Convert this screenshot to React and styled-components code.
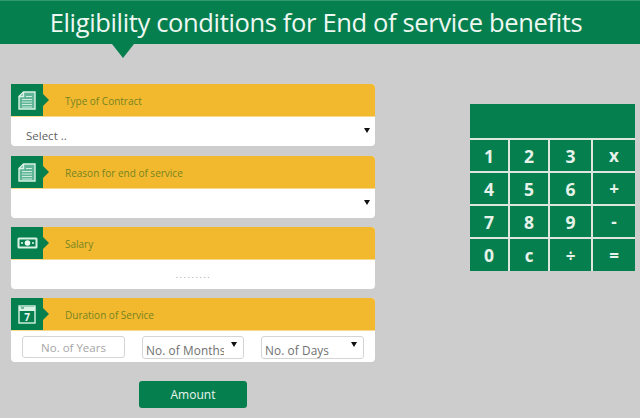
import React from 'react';
import styled, { createGlobalStyle } from 'styled-components';

const GREEN = '#067f4f';
const YELLOW = '#f2b92f';

const GlobalStyle = createGlobalStyle`
  html, body {
    margin: 0;
    padding: 0;
    background: #cdcdcd;
    font-family: "Open Sans", "Noto Sans", sans-serif;
  }
`;

const Page = styled.div`
  width: 640px;
  height: 418px;
  overflow: hidden;
`;

const Header = styled.header`
  position: relative;
  height: 44px;
  padding-right: 8px;
  background: ${GREEN};
  border-top: 1px solid #2f9a70;
  box-sizing: border-box;
  color: #eef8f2;
  font-size: 25.5px;
  letter-spacing: -0.35px;
  line-height: 42px;
  text-align: center;
  &::after {
    content: '';
    position: absolute;
    left: 112px;
    top: 43px;
    border-left: 11px solid transparent;
    border-right: 11px solid transparent;
    border-top: 14px solid ${GREEN};
  }
`;

const Main = styled.main`
  display: flex;
  align-items: flex-start;
  padding: 40px 5px 0 11px;
  justify-content: space-between;
`;

const Form = styled.form`
  width: 364px;
  display: flex;
  flex-direction: column;
`;

const Card = styled.section`
  margin-bottom: ${props => props.$gap}px;
  background: #fff;
  border-radius: 0 4px 4px 4px;
  overflow: hidden;
`;

const CardHead = styled.div`
  display: flex;
  align-items: center;
  height: 32px;
  background: ${YELLOW};
  border-bottom: 1px solid #f7d98e;
  box-sizing: content-box;
`;

const IconBox = styled.div`
  position: relative;
  width: 32px;
  height: 32px;
  display: flex;
  align-items: center;
  justify-content: center;
  background: ${GREEN};
  flex: none;
  &::after {
    content: '';
    position: absolute;
    left: 32px;
    top: 10px;
    border-top: 6px solid transparent;
    border-bottom: 6px solid transparent;
    border-left: 6px solid ${GREEN};
  }
`;

const CardTitle = styled.h2`
  margin: 1px 0 0 22px;
  font-size: 10px;
  font-weight: 400;
  color: #75841f;
`;

const SelectBody = styled.div`
  position: relative;
  height: 29px;
  padding-left: 15px;
  font-size: 11.5px;
  line-height: 38px;
  color: #5f5f5f;
  &::after {
    content: '';
    position: absolute;
    right: 5px;
    top: 11px;
    border-left: 3px solid transparent;
    border-right: 3px solid transparent;
    border-top: 5px solid #111;
  }
`;

const AmountDots = styled.div`
  height: 29px;
  line-height: 29px;
  text-align: center;
  font-size: 9px;
  letter-spacing: 1.6px;
  color: #a0a0a0;
  padding-left: 1px;
`;

const DurationRow = styled.div`
  display: flex;
  align-items: flex-start;
  height: 31px;
  padding: 5px 0 0 11px;
  box-sizing: border-box;
`;

const YearsField = styled.div`
  width: 101px;
  height: 20px;
  border: 1px solid #d4d4d4;
  border-radius: 3px;
  text-align: center;
  line-height: 21px;
  font-size: 11.5px;
  color: #a6a6a6;
`;

const SmallSelect = styled.div`
  position: relative;
  width: ${props => props.$width}px;
  height: 21px;
  margin-left: 17px;
  padding-left: 3px;
  border: 1px solid #d4d4d4;
  border-radius: 3px;
  font-size: 11.8px;
  letter-spacing: 0.1px;
  line-height: 27px;
  color: #707070;
  white-space: nowrap;
  overflow: hidden;
  &::after {
    content: '';
    position: absolute;
    right: 6px;
    top: 5px;
    border-left: 3px solid transparent;
    border-right: 3px solid transparent;
    border-top: 5px solid #111;
  }
`;

const Clip = styled.span`
  display: block;
  width: 78px;
  overflow: hidden;
`;

const AmountButton = styled.button`
  align-self: flex-start;
  margin: 6px 0 0 128px;
  width: 108px;
  height: 27px;
  padding: 0;
  border: none;
  border-radius: 3px;
  background: ${GREEN};
  color: #e8f5ee;
  font-family: inherit;
  font-size: 12px;
`;

const Calculator = styled.div`
  width: 165px;
  margin-top: 20px;
  display: grid;
  grid-template-columns: 38px 38px 41px 42px;
  grid-template-rows: 34px 31px 31px 31px 32px;
  gap: 2px;
  background: #dfe6e0;
`;

const Display = styled.div`
  grid-column: 1 / -1;
  background: ${GREEN};
`;

const Key = styled.div`
  display: flex;
  align-items: center;
  justify-content: center;
  background: ${GREEN};
  color: #e6f2ea;
  font-size: ${props => (props.$op ? 17 : 17.5)}px;
  font-weight: 700;
`;

const DocIcon = () => (
  <svg width="18" height="19" viewBox="0 0 18 19" fill="#5fb596" stroke="#d8f2e6" strokeWidth="1.4">
    <path d="M5.5 1H17v17H1V5.5z" />
    <path d="M5.5 1v4.5H1" fill="none" />
    <path d="M4 8.5h10M4 11h10M4 13.5h10M4 16h10M8 5.5h6" strokeWidth="1" stroke="#cdeee0" />
  </svg>
);

const MoneyIcon = () => (
  <svg width="21" height="12" viewBox="0 0 21 12" fill="none">
    <rect x="0.5" y="0.5" width="20" height="11" rx="1.5" fill="#d8f2e6" />
    <rect x="2.5" y="2.5" width="16" height="7" fill={GREEN} />
    <circle cx="10.5" cy="6" r="2.8" fill="#f0faf5" />
    <circle cx="5" cy="6" r="1.1" fill="#d8f2e6" />
    <circle cx="16" cy="6" r="1.1" fill="#d8f2e6" />
  </svg>
);

const CalendarIcon = () => (
  <svg width="18" height="19" viewBox="0 0 18 19" fill="none" stroke="#d8f2e6" strokeWidth="1.4">
    <rect x="1" y="1" width="16" height="17" />
    <path d="M1 4h16" strokeWidth="4" />
    <path d="M3 3h3" strokeWidth="1" stroke={GREEN} />
    <text x="9" y="16" textAnchor="middle" fontSize="10" fontWeight="700" fill="#eaf7f0" stroke="none" fontFamily="Open Sans, sans-serif">7</text>
  </svg>
);

const keys = ['1', '2', '3', 'x', '4', '5', '6', '+', '7', '8', '9', '-', '0', 'c', '÷', '='];
const ops = ['x', '+', '-', 'c', '÷', '='];

const FieldCard = ({ icon, title, gap, children }) => (
  <Card $gap={gap}>
    <CardHead>
      <IconBox>{icon}</IconBox>
      <CardTitle>{title}</CardTitle>
    </CardHead>
    {children}
  </Card>
);

export default function App() {
  return (
    <Page>
      <GlobalStyle />
      <Header>Eligibility conditions for End of service benefits</Header>
      <Main>
        <Form>
          <FieldCard icon={<DocIcon />} title="Type of Contract" gap={10}>
            <SelectBody>Select ..</SelectBody>
          </FieldCard>
          <FieldCard icon={<DocIcon />} title="Reason for end of service" gap={9}>
            <SelectBody />
          </FieldCard>
          <FieldCard icon={<MoneyIcon />} title="Salary" gap={9}>
            <AmountDots>.........</AmountDots>
          </FieldCard>
          <FieldCard icon={<CalendarIcon />} title="Duration of Service" gap={13}>
            <DurationRow>
              <YearsField>No. of Years</YearsField>
              <SmallSelect $width={97}><Clip>No. of Months</Clip></SmallSelect>
              <SmallSelect $width={98}>No. of Days</SmallSelect>
            </DurationRow>
          </FieldCard>
          <AmountButton type="button">Amount</AmountButton>
        </Form>
        <Calculator>
          <Display />
          {keys.map(k => <Key key={k} $op={ops.includes(k)}>{k}</Key>)}
        </Calculator>
      </Main>
    </Page>
  );
}
